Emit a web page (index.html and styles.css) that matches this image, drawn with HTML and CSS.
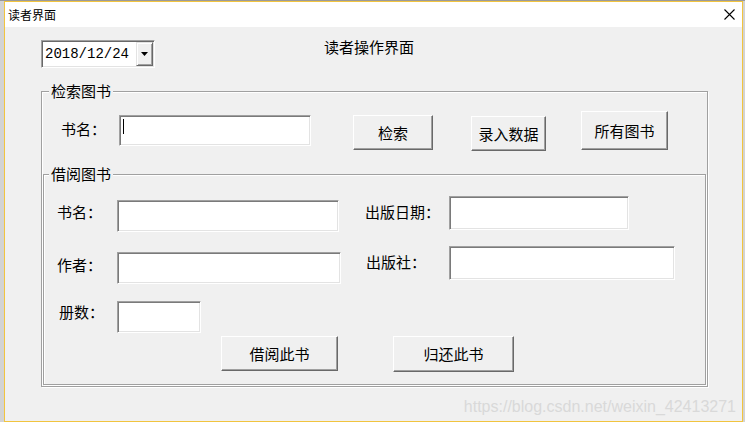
FILE: index.html
```html
<!DOCTYPE html>
<html lang="zh-CN">
<head>
<meta charset="utf-8">
<title>读者界面</title>
<link rel="stylesheet" href="styles.css">
</head>
<body>
<div class="desk">
  <div class="window">
    <div class="titlebar">
      <span class="title">读者界面</span>
      <svg class="close" width="11" height="11" viewBox="0 0 11 11"><path d="M0.5 0.5 L10.5 10.5 M10.5 0.5 L0.5 10.5" stroke="#000" stroke-width="1.1" fill="none"/></svg>
    </div>
    <div class="client">
      <div class="toprow">
        <div class="datepick">
          <span class="datetext">2018/12/24</span>
          <span class="dropbtn"><svg width="7" height="4" viewBox="0 0 7 4"><path d="M0 0H7L3.5 4Z" fill="#000"/></svg></span>
        </div>
        <div class="heading">读者操作界面</div>
      </div>

      <div class="group outer">
        <div class="legend lg-outer">检索图书</div>
        <div class="row r-search">
          <span class="lbl w3 s-lbl">书名：</span>
          <div class="field s-field"><span class="caret"></span></div>
          <button class="btn s-b1">检索</button>
          <button class="btn s-b2">录入数据</button>
          <button class="btn s-b3">所有图书</button>
        </div>

        <div class="group inner">
          <div class="legend lg-inner">借阅图书</div>
          <div class="row ra">
            <span class="lbl w3 a-l1">书名：</span>
            <div class="field a-f1"></div>
            <span class="lbl w5 a-l2">出版日期：</span>
            <div class="field a-f2"></div>
          </div>
          <div class="row rb">
            <span class="lbl w3 b-l1">作者：</span>
            <div class="field b-f1"></div>
            <span class="lbl w4 b-l2">出版社：</span>
            <div class="field b-f2"></div>
          </div>
          <div class="row rc">
            <span class="lbl w3 c-l1">册数：</span>
            <div class="field c-f1"></div>
          </div>
          <div class="row rd">
            <button class="btn d-b1">借阅此书</button>
            <button class="btn d-b2">归还此书</button>
          </div>
        </div>
      </div>
    </div>
    <div class="watermark">https://blog.csdn.net/weixin_42413271</div>
  </div>
</div>
</body>
</html>
```

FILE: styles.css
```css
* { box-sizing: border-box; }
html, body { margin: 0; padding: 0; }
body {
  width: 745px;
  height: 422px;
  overflow: hidden;
  background: #cfcfcf;
  font-family: "Noto Sans CJK SC", sans-serif;
  color: #000;
}
.desk {
  height: 422px;
  padding: 1px 0 0 4px;
  background: linear-gradient(#9a9a9a 0 1px, #d3d3d3 1px);
}
.window {
  position: relative;
  width: 739px;
  height: 421px;
  border: 1px solid #f1c43f;
  background: #f0f0f0;
  display: flex;
  flex-direction: column;
}
.titlebar {
  height: 25px;
  flex: none;
  background: #fff;
  display: flex;
  align-items: center;
  justify-content: space-between;
  padding: 0 7px 0 3px;
}
.title { font-size: 12px; line-height: 16px; }
.close { display: block; }

.client { flex: 1; padding: 11px 0 0 36px; }

.toprow { display: flex; align-items: flex-start; }
.datepick {
  width: 114px;
  height: 28px;
  margin-top: 2px;
  background: #fff;
  border: 1px solid;
  border-color: #a0a0a0 #fff #fff #a0a0a0;
  box-shadow: inset 1px 1px 0 #696969, inset -1px -1px 0 #e3e3e3;
  display: flex;
  align-items: center;
  justify-content: space-between;
  padding: 1px;
}
.datetext {
  font-family: "Liberation Mono", monospace;
  font-size: 14px;
  line-height: 16px;
  padding-left: 2px;
}
.dropbtn {
  width: 17px;
  height: 24px;
  background: #f0f0f0;
  border: 1px solid;
  border-color: #e3e3e3 #696969 #696969 #e3e3e3;
  box-shadow: inset 1px 1px 0 #fff, inset -1px -1px 0 #a0a0a0;
  display: flex;
  align-items: center;
  justify-content: center;
}
.dropbtn svg { display: block; margin-left: -1px; }
.heading {
  margin-left: 169px;
  font-size: 15px;
  line-height: 18px;
}

.group {
  border: 1px solid #a0a0a0;
  box-shadow: inset 1px 1px 0 #fff, 1px 1px 0 #fff;
}
.outer { width: 667px; height: 296px; margin-top: 23px; }
.inner { width: 663px; height: 211px; margin: 23px 1px 0 1px; }
.legend {
  width: fit-content;
  margin-top: -10px;
  padding: 0 2px;
  background: #f0f0f0;
  font-size: 15px;
  line-height: 18px;
}
.lg-outer { margin-left: 7px; }
.lg-inner { margin-left: 5px; }

.row { display: flex; align-items: flex-start; }
.lbl { font-size: 15px; line-height: 18px; white-space: nowrap; }
.w3 { width: 45px; }
.w4 { width: 60px; }
.w5 { width: 75px; }

.field {
  flex: none;
  background: #fff;
  border: 1px solid;
  border-color: #a0a0a0 #fff #fff #a0a0a0;
  box-shadow: inset 1px 1px 0 #7a7a7a, inset -1px -1px 0 #e3e3e3;
}
.caret {
  display: block;
  width: 1px;
  height: 15px;
  margin: 3px 0 0 3px;
  background: #000;
}

.btn {
  flex: none;
  padding: 0;
  font-family: "Noto Sans CJK SC", sans-serif;
  font-size: 15px;
  line-height: 18px;
  color: #000;
  background: #f0f0f0;
  border: 1px solid;
  border-color: #fff #696969 #696969 #fff;
  box-shadow: inset -1px -1px 0 #a0a0a0;
}

/* search row */
.r-search { margin-top: 11px; padding-left: 19px; }
.s-lbl { margin-top: 9px; }
.s-field { width: 192px; height: 31px; margin: 4px 0 0 13px; }
.s-b1 { width: 80px; height: 35px; margin: 4px 0 0 42px; }
.s-b2 { width: 75px; height: 35px; margin: 5px 0 0 38px; }
.s-b3 { width: 87px; height: 39px; margin: 0 0 0 35px; }

/* borrow rows */
.ra { margin-top: 13px; }
.a-l1 { margin: 7px 0 0 13px; }
.a-f1 { width: 222px; height: 32px; margin: 4px 0 0 15px; }
.a-l2 { margin: 7px 0 0 26px; }
.a-f2 { width: 180px; height: 34px; margin-left: 9px; }

.rb { margin-top: 14px; }
.b-l1 { margin: 10px 0 0 13px; }
.b-f1 { width: 224px; height: 32px; margin: 6px 0 0 15px; }
.b-l2 { margin: 7px 0 0 25px; }
.b-f2 { width: 226px; height: 34px; margin-left: 23px; }

.rc { margin-top: 17px; }
.c-l1 { margin: 2px 0 0 15px; }
.c-f1 { width: 84px; height: 32px; margin-left: 13px; }

.rd { margin-top: 3px; }
.d-b1 { width: 117px; height: 35px; margin-left: 177px; }
.d-b2 { width: 121px; height: 36px; margin-left: 55px; }

.watermark {
  position: absolute;
  right: 6px;
  top: 396px;
  font-family: "Liberation Sans", Arial, sans-serif;
  font-size: 16px;
  line-height: 18px;
  color: #d9d9d9;
  white-space: nowrap;
}
```
